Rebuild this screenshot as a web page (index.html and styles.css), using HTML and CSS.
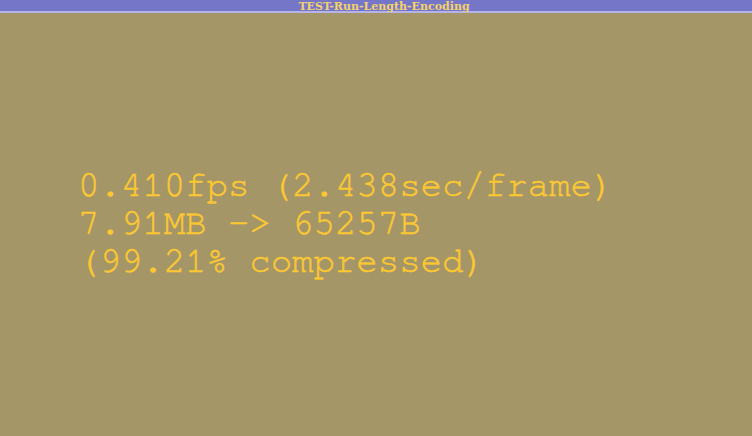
FILE: index.html
```html
<!DOCTYPE html>
<html>
<head>
<meta charset="utf-8">
<link rel="stylesheet" href="styles.css">
</head>
<body>
<div class="titlebar"><span class="title">TEST-Run-Length-Encoding</span></div>
<main class="canvas">
  <div class="stats">
    <div class="line">0.410fps (2.438sec/frame)</div>
    <div class="line">7.91MB -&gt; 65257B</div>
    <div class="line">(99.21% compressed)</div>
  </div>
</main>
</body>
</html>
```

FILE: styles.css
```css
html, body {
  margin: 0;
  padding: 0;
  width: 752px;
  height: 436px;
  overflow: hidden;
  background: #a59668;
}
.titlebar {
  height: 11px;
  background: #7676c9;
  border-bottom: 2px solid #b4b4e6;
  display: flex;
  justify-content: center;
  align-items: center;
  padding-left: 16px;
}
.title {
  font-family: "DejaVu Serif", "Liberation Serif", serif;
  font-weight: bold;
  font-size: 11px;
  line-height: 11px;
  color: #f4d26a;
  position: relative;
  top: 1px;
}
.canvas {
  padding: 153px 0 0 78px;
}
.stats {
  font-family: "FreeMono", "Nimbus Mono PS", "Courier", "Liberation Mono", monospace;
  font-size: 35.7px;
  line-height: 38px;
  color: #fcc832;
  -webkit-text-stroke: 0.5px #fcc832;
}
.line {
  white-space: pre;
}
```
